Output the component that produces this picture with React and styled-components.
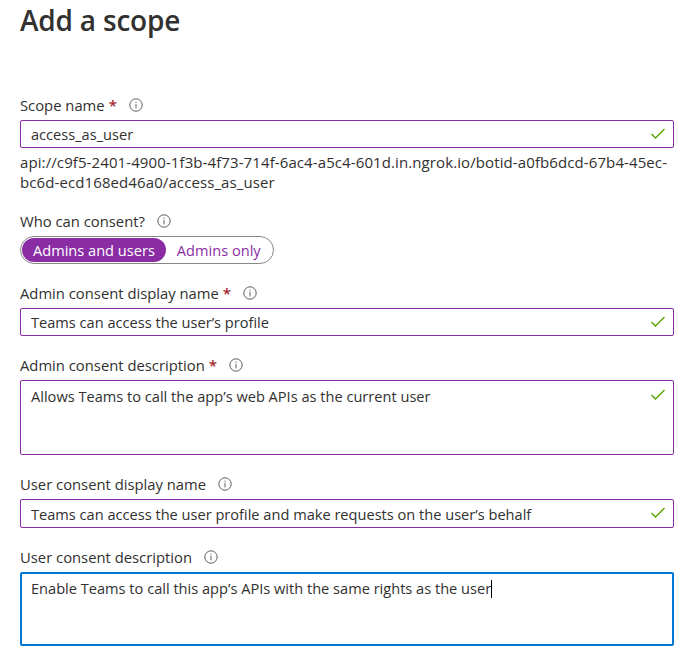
import React from "react";
import styled, { createGlobalStyle } from "styled-components";

const Global = createGlobalStyle`
  html, body { margin: 0; padding: 0; background: #ffffff; }
  body { font-family: "Open Sans", "Noto Sans", sans-serif; color: #323130; }
`;

const Page = styled.div`
  width: 654px;
  padding: 0 0 0 20px;
`;

const Title = styled.h1`
  margin: 0;
  padding-top: 2px;
  font-size: 28px;
  line-height: 36px;
  font-weight: 600;
  color: #323130;
  letter-spacing: -0.2px;
`;

const Form = styled.div`
  display: flex;
  flex-direction: column;
  gap: 19px;
  margin-top: 57px;
`;

const Field = styled.div`
  display: flex;
  flex-direction: column;
`;

const Label = styled.div`
  display: flex;
  align-items: center;
  height: 20px;
  font-size: 14.8px;
  line-height: 20px;
  margin-bottom: 5px;
`;

const Star = styled.span`
  color: #a4262c;
  font-size: 15px;
  margin-left: 4px;
  font-weight: 600;
`;

const InfoWrap = styled.span`
  display: inline-flex;
  margin-left: 12px;
  color: #605e5c;
`;

const Box = styled.div`
  box-sizing: border-box;
  position: relative;
  height: ${(p) => p.$h}px;
  border: ${(p) => (p.$focused ? "2px solid #0078d4" : "1px solid #8a2da5")};
  border-radius: 2px;
  padding: ${(p) => (p.$focused ? "4px 9px" : "5px 10px")};
  padding-right: 36px;
  font-size: 14.6px;
  line-height: ${(p) => (p.$multi ? "20px" : "14px")};
  display: flex;
  align-items: ${(p) => (p.$multi ? "flex-start" : "center")};
  color: #323130;
  white-space: nowrap;
`;

const Check = styled.span`
  position: absolute;
  right: 7px;
  top: ${(p) => (p.$multi ? 8 : 7)}px;
  display: inline-flex;
`;

const Caret = styled.span`
  display: inline-block;
  width: 1px;
  height: 18px;
  background: #000;
  vertical-align: -4px;
`;

const Help = styled.div`
  margin-top: 4px;
  font-size: 15px;
  line-height: 20px;
  letter-spacing: 0.1px;
  color: #323130;
  white-space: nowrap;
`;

const Toggle = styled.div`
  box-sizing: border-box;
  display: inline-flex;
  align-self: flex-start;
  align-items: center;
  height: 28px;
  border: 1px solid #8a8886;
  border-radius: 14px;
  padding: 1px;
`;

const Option = styled.span`
  height: 24px;
  display: inline-flex;
  align-items: center;
  padding: 0 11px;
  border-radius: 12px;
  font-size: 14.6px;
  background: ${(p) => (p.$active ? "#8a2da5" : "transparent")};
  color: ${(p) => (p.$active ? "#ffffff" : "#8a2da5")};
`;

const InfoIcon = () => (
  <svg width="14" height="14" viewBox="0 0 14 14">
    <circle cx="7" cy="7" r="6.2" fill="none" stroke="#605e5c" strokeWidth="1" />
    <rect x="6.5" y="3.6" width="1" height="1.1" fill="#605e5c" />
    <rect x="6.5" y="5.8" width="1" height="4.6" fill="#605e5c" />
  </svg>
);

const CheckIcon = () => (
  <svg width="16" height="12" viewBox="0 0 16 12">
    <path d="M1.5 6 L5.5 10 L14.5 1" fill="none" stroke="#57a300" strokeWidth="1.4" />
  </svg>
);

const FieldLabel = ({ text, required }) => (
  <Label>
    {text}
    {required && <Star>*</Star>}
    <InfoWrap>
      <InfoIcon />
    </InfoWrap>
  </Label>
);

export default function App() {
  return (
    <Page>
      <Global />
      <Title>Add a scope</Title>
      <Form>
        <Field>
          <FieldLabel text="Scope name" required />
          <Box $h={28}>
            access_as_user
            <Check>
              <CheckIcon />
            </Check>
          </Box>
          <Help>
            api://c9f5-2401-4900-1f3b-4f73-714f-6ac4-a5c4-601d.in.ngrok.io/botid-a0fb6dcd-67b4-45ec-
            <br />
            bc6d-ecd168ed46a0/access_as_user
          </Help>
        </Field>
        <Field>
          <FieldLabel text="Who can consent?" />
          <Toggle>
            <Option $active>Admins and users</Option>
            <Option>Admins only</Option>
          </Toggle>
        </Field>
        <Field>
          <FieldLabel text="Admin consent display name" required />
          <Box $h={28}>
            Teams can access the user’s profile
            <Check>
              <CheckIcon />
            </Check>
          </Box>
        </Field>
        <Field>
          <FieldLabel text="Admin consent description" required />
          <Box $h={75} $multi>
            Allows Teams to call the app’s web APIs as the current user
            <Check $multi>
              <CheckIcon />
            </Check>
          </Box>
        </Field>
        <Field>
          <FieldLabel text="User consent display name" />
          <Box $h={29}>
            Teams can access the user profile and make requests on the user’s behalf
            <Check>
              <CheckIcon />
            </Check>
          </Box>
        </Field>
        <Field>
          <FieldLabel text="User consent description" />
          <Box $h={74} $multi $focused>
            <span>
              Enable Teams to call this app’s APIs with the same rights as the user
              <Caret />
            </span>
          </Box>
        </Field>
      </Form>
    </Page>
  );
}
